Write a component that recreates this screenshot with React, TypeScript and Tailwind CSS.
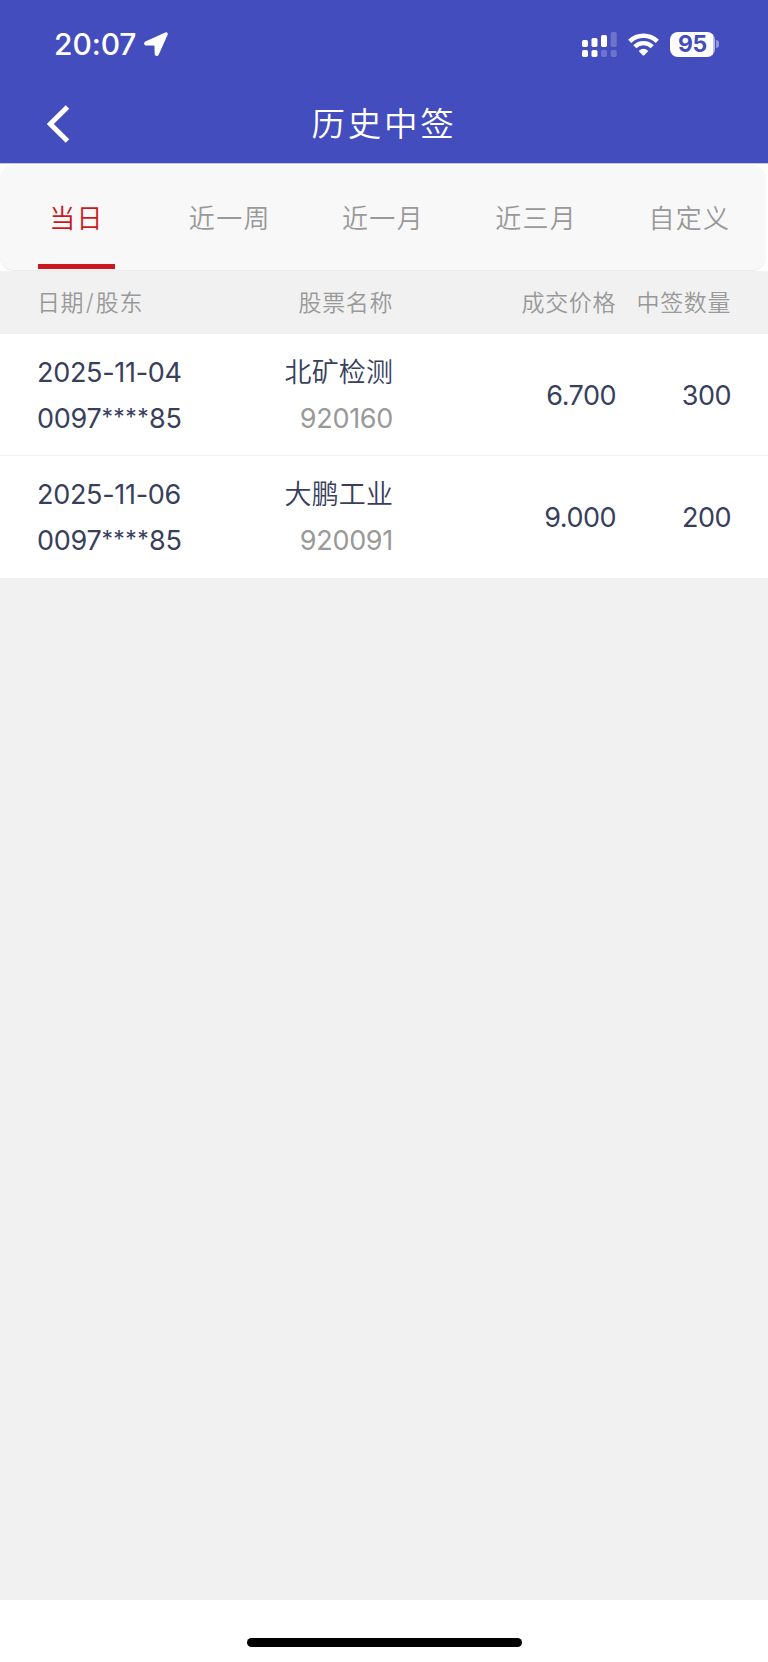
import React, { useState } from 'react';

interface LotteryRecord {
  date: string;
  account: [string, string, string];
  name: string;
  code: string;
  price: string;
  quantity: number;
}

const tabs: string[] = ['当日', '近一周', '近一月', '近三月', '自定义'];

const records: LotteryRecord[] = [
  { date: '2025-11-04', account: ['0097', '****', '85'], name: '北矿检测', code: '920160', price: '6.700', quantity: 300 },
  { date: '2025-11-06', account: ['0097', '****', '85'], name: '大鹏工业', code: '920091', price: '9.000', quantity: 200 },
];

const StatusBar: React.FC = () => (
  <div className="flex h-[88px] items-center justify-between pl-[54px] pr-[49px]">
    <div className="flex items-center gap-2">
      <span className="text-[30px] leading-[30px] font-medium tracking-[-0.1px]">20:07</span>
      <svg className="h-6 w-6" viewBox="0 0 24 24" fill="currentColor">
        <path d="M21.3.5 1.3 9.4C-.4 10.3-.2 13.3 1.700 13.400L9.600 13.600Q10.500 13.600 10.500 14.500L10.700 22C10.800 24.200 13.700 24.600 14.700 22.700L23.600 2.800C24.200 1.100 22.800-.2 21.300.5Z" />
      </svg>
    </div>
    <div className="flex items-center">
      <svg className="h-[25px] w-9" viewBox="0 0 36 25" fill="currentColor">
        <rect x="0" y="8" width="6" height="7" rx="1.700" />
        <rect x="9.500" y="6" width="6" height="9" rx="1.700" />
        <rect x="19" y="3" width="6" height="12" rx="1.700" />
        <rect x="28.700" y="0" width="6" height="15" rx="1.700" opacity="0.22" />
        <rect x="0" y="18" width="6" height="7" rx="1.700" />
        <rect x="9.500" y="18" width="6" height="7" rx="1.700" />
        <rect x="19" y="18" width="6" height="7" rx="1.700" opacity="0.22" />
        <rect x="28.700" y="18" width="6" height="7" rx="1.700" opacity="0.22" />
      </svg>
      <svg className="ml-[10px] h-[23px] w-[31px]" viewBox="0 0 31 23" fill="none" stroke="currentColor" strokeWidth="4.400">
        <path d="M1.700 8.400A19.500 19.500 0 0 1 29.300 8.400" />
        <path d="M6.800 13.700A12.300 12.300 0 0 1 24.200 13.700" />
        <path d="M10.700 18Q15.500 13.600 20.300 18L16.300 22.200Q15.500 23 14.700 22.200Z" fill="currentColor" stroke="none" />
      </svg>
      <div className="ml-[11px] flex h-[25px] w-[45px] items-center justify-center rounded-[8px] bg-[linear-gradient(90deg,#fff_43px,#b9bce6_43px)] text-[23px] leading-[25px] font-bold tracking-[-0.4px] text-[#444dbe]">
        <span>95</span>
      </div>
      <div className="ml-px h-2 w-[3px] rounded-r-full bg-[#8f94d8]" />
    </div>
  </div>
);

const TitleBar: React.FC = () => (
  <div className="grid h-[72px] grid-cols-3 items-center">
    <button className="ml-[47px] w-[23px]" aria-label="返回">
      <svg className="h-[38px] w-[23px]" viewBox="0 0 23 38" fill="none" stroke="currentColor" strokeWidth="5">
        <path d="M20.500 2 3.300 19 20.500 36" />
      </svg>
    </button>
    <h1 className="text-center text-[33.5px] leading-[42px] font-[350] tracking-[2.8px]">历史中签</h1>
  </div>
);

export default function App() {
  const [active, setActive] = useState(0);

  return (
    <div className="flex h-[1662px] w-[768px] flex-col bg-[#f1f1f1] font-[Inter,'Noto_Sans_CJK_SC',sans-serif]">
      <header className="h-[163px] bg-[#444dbe] text-white">
        <StatusBar />
        <TitleBar />
      </header>

      <div className="h-[108px] border-t border-[#c5c8ee] bg-white pt-px pr-[2px]">
        <nav className="grid h-[106px] grid-cols-5 rounded-[14px] border-b border-[#ececec] bg-[#f8f8f8]">
          {tabs.map((tab, i) => (
            <button
              key={tab}
              onClick={() => setActive(i)}
              className={`flex flex-col items-center text-[26px] leading-[36px] font-[350] tracking-[1.3px] ${i === active ? 'text-[#cb171e]' : 'text-[#999]'}`}
            >
              <span className="mt-[36px] h-[63px]">{tab}</span>
              {i === active && <span className="h-[5px] w-[77px] bg-[#cb171e]" />}
            </button>
          ))}
        </nav>
      </div>

      <div className="grid h-[63px] grid-cols-[200px_156px_223px_115px] items-center px-[37px] pt-[2px] text-right text-[23px] font-[350] tracking-[0.6px] text-[#999]">
        <span className="text-left">日期<span className="mx-[1.5px]">/</span>股东</span>
        <span>股票名称</span>
        <span>成交价格</span>
        <span>中签数量</span>
      </div>

      {records.map(record => (
        <div
          key={record.date}
          className="grid h-[122px] grid-cols-[200px_156px_223px_115px] items-center border-b border-[#f1f1f1] bg-white px-[37px] pt-[2px] text-right text-[27px] leading-[46px] font-normal tracking-[-0.3px] text-[#383f5d] last-of-type:border-b-0 last-of-type:pt-px"
        >
          <div className="text-left">
            <p>{record.date}</p>
            <p>
              {record.account[0]}
              <span className="align-[3px] text-[23px] leading-none tracking-[0.4px]">{record.account[1]}</span>
              {record.account[2]}
            </p>
          </div>
          <div>
            <p className="font-[350] tracking-[0.1px]">{record.name}</p>
            <p className="text-[#999]">{record.code}</p>
          </div>
          <span className="tracking-[-0.5px]">{record.price}</span>
          <span className="tracking-[-0.5px]">{record.quantity}</span>
        </div>
      ))}

      <footer className="mt-auto flex h-[62px] justify-center bg-white pt-[38px]">
        <div className="h-[9px] w-[275px] rounded-full bg-black" />
      </footer>
    </div>
  );
}
